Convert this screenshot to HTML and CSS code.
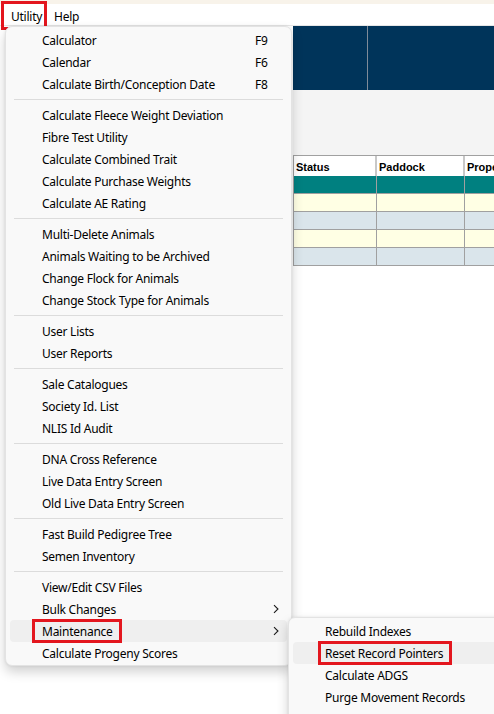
FILE: index.html
```html
<!DOCTYPE html>
<html lang="en">
<head>
<meta charset="utf-8">
<title>Utility menu</title>
<link rel="stylesheet" href="styles.css">
</head>
<body>
<div class="topstrip"></div>
<div class="menubar">
  <span class="mb-item marked">Utility</span>
  <span class="mb-item">Help</span>
</div>
<div class="app">
  <div class="leftpane"></div>
  <div class="content">
    <div class="banner"><div class="b1"></div><div class="b2"></div></div>
    <div class="toolbar"></div>
    <div class="grid">
      <div class="row head"><div class="c c1">Status</div><div class="c c2">Paddock</div><div class="c c3">Prope</div></div>
      <div class="row sel"><div class="c c1"></div><div class="c c2"></div><div class="c c3"></div></div>
      <div class="row y"><div class="c c1"></div><div class="c c2"></div><div class="c c3"></div></div>
      <div class="row b"><div class="c c1"></div><div class="c c2"></div><div class="c c3"></div></div>
      <div class="row y"><div class="c c1"></div><div class="c c2"></div><div class="c c3"></div></div>
      <div class="row b"><div class="c c1"></div><div class="c c2"></div><div class="c c3"></div></div>
    </div>
  </div>
</div>

<div class="menu dropdown">
  <div class="mi"><span class="lbl">Calculator</span><span class="sc">F9</span></div>
  <div class="mi"><span class="lbl">Calendar</span><span class="sc">F6</span></div>
  <div class="mi"><span class="lbl">Calculate Birth/Conception Date</span><span class="sc">F8</span></div>
  <div class="sep"></div>
  <div class="mi"><span class="lbl">Calculate Fleece Weight Deviation</span></div>
  <div class="mi"><span class="lbl">Fibre Test Utility</span></div>
  <div class="mi"><span class="lbl">Calculate Combined Trait</span></div>
  <div class="mi"><span class="lbl">Calculate Purchase Weights</span></div>
  <div class="mi"><span class="lbl">Calculate AE Rating</span></div>
  <div class="sep"></div>
  <div class="mi"><span class="lbl">Multi-Delete Animals</span></div>
  <div class="mi"><span class="lbl">Animals Waiting to be Archived</span></div>
  <div class="mi"><span class="lbl">Change Flock for Animals</span></div>
  <div class="mi"><span class="lbl">Change Stock Type for Animals</span></div>
  <div class="sep"></div>
  <div class="mi"><span class="lbl">User Lists</span></div>
  <div class="mi"><span class="lbl">User Reports</span></div>
  <div class="sep"></div>
  <div class="mi"><span class="lbl">Sale Catalogues</span></div>
  <div class="mi"><span class="lbl">Society Id. List</span></div>
  <div class="mi"><span class="lbl">NLIS Id Audit</span></div>
  <div class="sep"></div>
  <div class="mi"><span class="lbl">DNA Cross Reference</span></div>
  <div class="mi"><span class="lbl">Live Data Entry Screen</span></div>
  <div class="mi"><span class="lbl">Old Live Data Entry Screen</span></div>
  <div class="sep"></div>
  <div class="mi"><span class="lbl">Fast Build Pedigree Tree</span></div>
  <div class="mi"><span class="lbl">Semen Inventory</span></div>
  <div class="sep"></div>
  <div class="mi"><span class="lbl">View/Edit CSV Files</span></div>
  <div class="mi"><span class="lbl">Bulk Changes</span><span class="sc"></span><svg class="chev" width="6" height="10" viewBox="0 0 6 10"><polyline points="1,1 5,5 1,9" fill="none" stroke="#1a1a1a" stroke-width="1.1"/></svg></div>
  <div class="mi hover"><span class="lbl"><span class="marked mk-maint">Maintenance</span></span><span class="sc"></span><svg class="chev" width="6" height="10" viewBox="0 0 6 10"><polyline points="1,1 5,5 1,9" fill="none" stroke="#1a1a1a" stroke-width="1.1"/></svg></div>
  <div class="mi"><span class="lbl">Calculate Progeny Scores</span></div>
</div>

<div class="menu submenu">
  <div class="mi"><span class="lbl">Rebuild Indexes</span></div>
  <div class="mi hover"><span class="lbl"><span class="marked mk-reset">Reset Record Pointers</span></span></div>
  <div class="mi"><span class="lbl">Calculate ADGS</span></div>
  <div class="mi"><span class="lbl">Purge Movement Records</span></div>
</div>
</body>
</html>
```

FILE: styles.css
```css
* { box-sizing: border-box; }
html, body { margin: 0; padding: 0; }
body {
  width: 494px;
  height: 714px;
  overflow: hidden;
  background: #ffffff;
  font-family: "Noto Sans", "Open Sans", sans-serif;
  font-size: 12px;
  letter-spacing: -0.25px;
  color: #000;
  position: relative;
}
.topstrip { height: 4px; background: #f8f3ea; }
.menubar {
  height: 22px;
  display: flex;
  align-items: center;
  padding-left: 5px;
  background: #fff;
  border-bottom: 1px solid #e6e6e6;
}
.mb-item {
  position: relative;
  height: 22px;
  line-height: 22px;
  padding: 2px 6px 0;
}
.marked { position: relative; }
.marked::after {
  content: "";
  position: absolute;
  border: 3px solid #e3161e;
  pointer-events: none;
}
.mb-item.marked::after { top: -3px; bottom: -4px; left: -4px; right: 1px; }

.app { display: flex; height: 688px; }
.leftpane { width: 293px; flex: none; background: #fff; }
.content { flex: 1; display: flex; flex-direction: column; }
.banner { height: 64px; display: flex; background: #00345a; }
.b1 { width: 75px; border-right: 1px solid #7f8b99; }
.b2 { flex: 1; }
.toolbar { height: 65px; background: #f4f4f4; }
.grid {
  border-top: 1px solid #a0a0a0;
  border-left: 1px solid #a0a0a0;
  font-family: "Liberation Sans", Arial, sans-serif;
  letter-spacing: 0;
}
.row { display: flex; height: 18px; border-bottom: 1px solid #a0a0a0; }
.row .c { border-right: 1px solid #a0a0a0; }
.c1 { width: 83px; }
.c2 { width: 88px; }
.c3 { flex: 1; border-right: none !important; }
.row.head { height: 20px; border-bottom: none; background: #fff; }
.row.head .c { border-right: 2px solid #c8c8c8; font-weight: bold; font-size: 11px; padding: 5px 0 0 2px; line-height: 13px; white-space: nowrap; overflow: hidden; }
.row.sel { height: 18px; background: #008080; }
.row.y { background: #ffffe4; }
.row.b { background: #dae5eb; }

.menu {
  position: absolute;
  background: #f9f9f9;
  border: 1px solid #e3e3e3;
  border-radius: 7px;
  box-shadow: 0 6px 12px rgba(0,0,0,0.18), 0 0 3px rgba(0,0,0,0.08);
}
.dropdown { left: 5px; top: 26px; width: 287px; padding: 2px 0 1px; }
.submenu { left: 288px; top: 617px; width: 230px; height: 110px; padding: 2px 0 0; }
.mi {
  display: flex;
  align-items: center;
  height: 22px;
  margin: 0 4px;
  padding-left: 32px;
  padding-right: 8px;
  border-radius: 4px;
  line-height: 22px;
  white-space: nowrap;
}
.mi.hover { background: #efefef; }
.lbl { width: 213px; position: relative; top: 1px; }
.sc { width: 19px; position: relative; top: 1px; }
.chev { width: 6px; height: 10px; display: block; }
.submenu .lbl { width: auto; }
.sep { height: 9px; margin: 0 8px; position: relative; }
.sep::after {
  content: "";
  position: absolute;
  left: 0; right: 0; top: 4px;
  border-top: 1px solid #dcdcdc;
}
.mk-maint { display: inline-block; }
.mk-maint::after { top: -2px; bottom: 0; left: -10px; right: -9px; }
.mk-reset { display: inline-block; }
.mk-reset::after { top: -2px; bottom: 0; left: -7px; right: -9px; }
```
